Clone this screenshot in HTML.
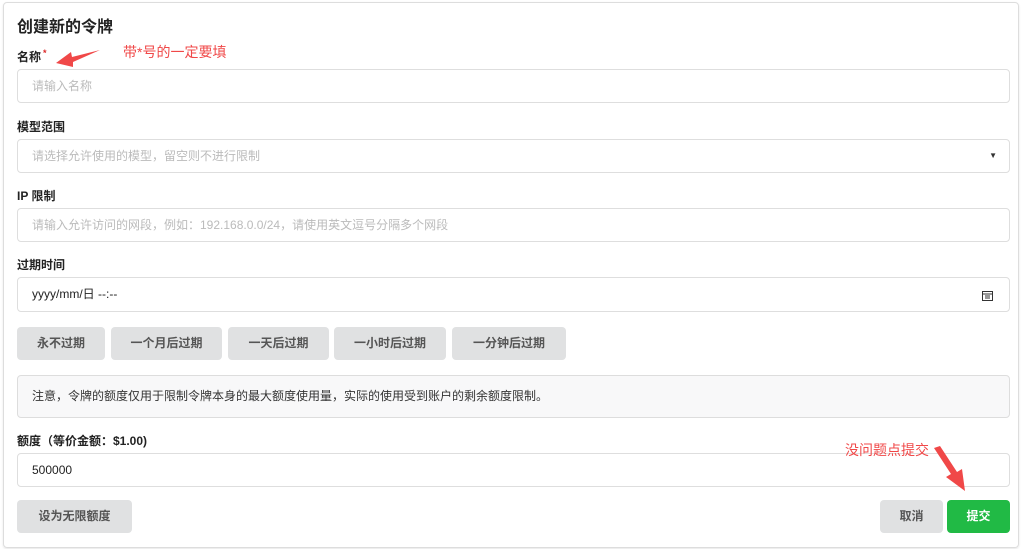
<!DOCTYPE html><html><head><meta charset="utf-8"><style>
body{margin:0;width:1024px;height:549px;background:#fff;font-family:"Liberation Sans","Noto Sans CJK SC",sans-serif;position:relative;overflow:hidden;color:#222}
.card{position:absolute;left:3px;top:2px;width:1014px;height:544px;border:1px solid #ddd;border-radius:4px;box-shadow:0 1px 2px rgba(0,0,0,.1)}
.a{position:absolute}
.lbl{position:absolute;left:17px;font-size:12px;font-weight:bold;color:#222}
.inp{position:absolute;left:17px;width:993px;height:34px;border:1px solid #dedede;border-radius:4px;font-size:12px;color:#bbb;box-sizing:border-box;padding-left:14px;line-height:32px}
.btn{position:absolute;top:327px;height:33px;background:#e0e1e2;border-radius:4px;font-size:12px;font-weight:bold;color:#555;text-align:center;line-height:33px}
.red{color:#f04848;font-size:14px;position:absolute}
</style></head><body>
<div class="card"></div>
<div class="a" style="left:17px;top:13px;font-size:16px;font-weight:bold">创建新的令牌</div>
<div class="lbl" style="top:48px">名称<span style="color:#db2828;font-size:9px;vertical-align:top;margin-left:2px">*</span></div>
<div class="inp" style="top:69px">请输入名称</div>
<div class="lbl" style="top:118px">模型范围</div>
<div class="inp" style="top:139px">请选择允许使用的模型，留空则不进行限制<span style="position:absolute;right:12px;top:0;color:#333;font-size:8px">▼</span></div>
<div class="lbl" style="top:187px">IP 限制</div>
<div class="inp" style="top:208px">请输入允许访问的网段，例如：192.168.0.0/24，请使用英文逗号分隔多个网段</div>
<div class="lbl" style="top:256px">过期时间</div>
<div class="inp" style="top:277px;height:35px;line-height:33px;color:#222">yyyy/mm/日 --:--
<svg style="position:absolute;right:16px;top:12px" width="11" height="11" viewBox="0 0 11 11"><rect x="0.5" y="1.5" width="10" height="9" fill="none" stroke="#333"/><line x1="0.5" y1="4" x2="10.5" y2="4" stroke="#333"/><line x1="3" y1="6" x2="8" y2="6" stroke="#333"/><line x1="3" y1="8" x2="8" y2="8" stroke="#333"/></svg></div>
<div class="btn" style="left:17px;width:88px">永不过期</div>
<div class="btn" style="left:111px;width:111px">一个月后过期</div>
<div class="btn" style="left:228px;width:101px">一天后过期</div>
<div class="btn" style="left:334px;width:112px">一小时后过期</div>
<div class="btn" style="left:452px;width:114px">一分钟后过期</div>
<div class="a" style="left:17px;top:375px;width:993px;height:43px;background:#f8f8f9;border:1px solid #ddd;border-radius:4px;box-sizing:border-box;font-size:12px;color:#333;line-height:41px;padding-left:14px">注意，令牌的额度仅用于限制令牌本身的最大额度使用量，实际的使用受到账户的剩余额度限制。</div>
<div class="lbl" style="top:432px">额度（等价金额：$1.00)</div>
<div class="inp" style="top:453px;color:#222">500000</div>
<div class="btn" style="left:17px;top:500px;width:115px">设为无限额度</div>
<div class="btn" style="left:880px;top:500px;width:63px">取消</div>
<div class="btn" style="left:947px;top:500px;width:63px;background:#21ba45;color:#fff">提交</div>
<div class="red" style="left:123px;top:42px">带*号的一定要填</div>
<div class="red" style="left:845px;top:440px">没问题点提交</div>
<svg class="a" style="left:0;top:0" width="1024" height="549"><path d="M100 50 L72 57 L71 52 L56 63 L73 67 L73 62 Z" fill="#f04848"/><path d="M934 448 L951 474 L946 477 L965 491 L962 469 L957 472 L940 446 Z" fill="#f04848"/></svg>
</body></html>
